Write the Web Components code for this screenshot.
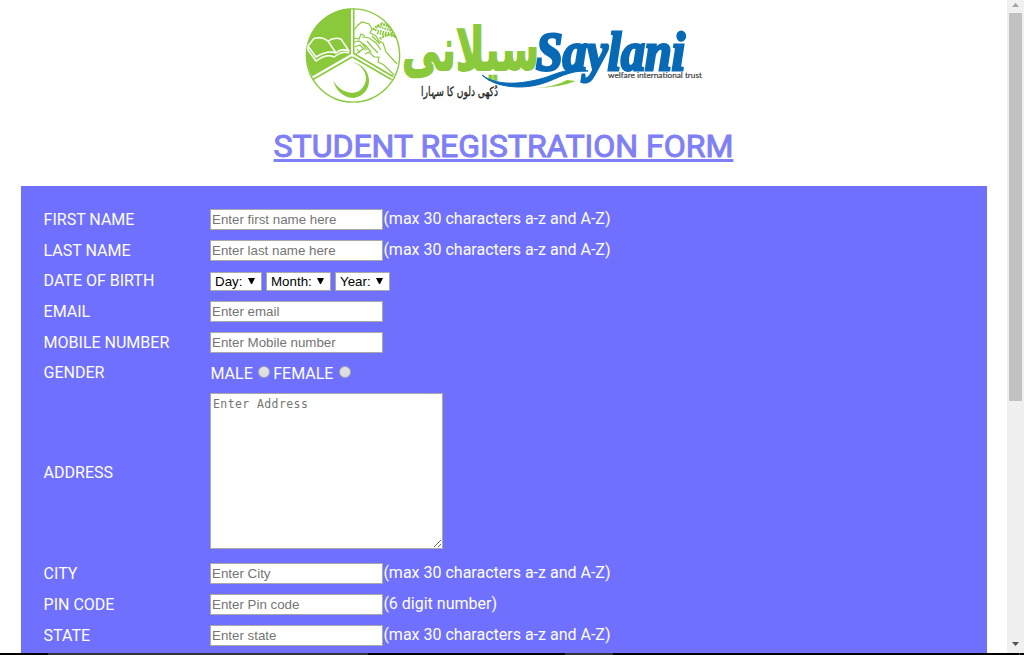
<!DOCTYPE html>
<html lang="en"><head><meta charset="utf-8"><title>Student Registration Form</title>
<style>html,body{margin:0;height:655px;overflow:hidden;background:#fff;font-family:Roboto,"Liberation Sans",sans-serif}</style></head>
<body><registration-page></registration-page>
<script>
const define=(name,html)=>customElements.define(name,class extends HTMLElement{
  constructor(){super();const t=document.createElement('template');t.innerHTML=typeof html==='function'?html(this):html;
    this.attachShadow({mode:'open'}).append(t.content.cloneNode(true));}
});
define('trust-logo',`<style>:host{display:block;height:108px}svg{display:block;margin-left:300px;overflow:visible}</style>
<svg width="410" height="108" viewBox="300 0 410 108" role="img" aria-label="Saylani welfare international trust">
<path d="M351 54L351 8.500A46 46 0 0 0 312 76.500Z" fill="#8bc93c"/>
<g fill="none" stroke="#8bc93c"><circle cx="353" cy="55.500" r="46.600" stroke-width="1.400"/>
<path d="M353.700 8.500V53.500L393 76.500M352 57L313 79.500M352.500 57L391.500 79.500" stroke-width="1.600"/>
<path d="M354 30L358 25 362 22 369 24 372 29 370 33 376 36 379 41 383 43 386 52 397 64M354 38L359 39 361 34 365 36M362 37L369 38 376 43 381 50M354 42L359 41 366 46 371 52M355 47L360 45 365 50M356 54L363 49M367 41L373 48 378 53M365 54L369 52 374 57 379 57 378 62 384 65 394 75M357 49L360 53M361 42L367 50M372 36L380 44" stroke-width="1.200"/>
<path d="M373 30Q382 20 390 28L394 36Q386 33 380 39" stroke-width="2.600" stroke-dasharray="2 1"/><path d="M377 26L392 31M375 30L392 34M381 23L390 27M377 33L388 35" stroke-width="2" stroke-dasharray="1.600 1"/></g>
<path d="M351 62C367 65 371 83 359 91C350 96 338 90 333 80C336 92 345 98 354 98C376 94 373 64 351 62Z" fill="#8bc93c"/>
<g fill="none" stroke="#fff" stroke-width="1.500" stroke-linejoin="round"><path d="M308 46L314 38.500Q322 36 328 41 334 37 341 39L349 51Q341 48 336 53 328 50 316 57Z"/><path d="M328 41L336 53M308 47V50L316 61Q327 53 334 57L337 55Q343 51 349 53"/></g>
<text x="402" y="70" textLength="137" lengthAdjust="spacingAndGlyphs" font-family="DejaVu Sans" font-weight="700" font-size="59" fill="#8bc93c" stroke="#8bc93c" stroke-width="1.800">سیلانی</text>
<path d="M482 75C499 88 528 83 547 77C562 71 576 67 588 71C569 70 557 79 544 83C524 90 495 88 482 75Z" fill="#0869b5" stroke="#0869b5"/>
<path d="M534 88Q555 87 567 80L576 81Q559 88 534 88Z" fill="#8bc93c"/>
<text x="536" y="70" textLength="149" lengthAdjust="spacingAndGlyphs" font-family="Liberation Serif" font-style="italic" font-weight="700" font-size="55" fill="#0869b5" stroke="#0869b5" stroke-width="3">Saylani</text>
<text x="608" y="78" textLength="94" lengthAdjust="spacingAndGlyphs" font-family="Lato" font-size="7.700" fill="#444" stroke="#444" stroke-width=".2">welfare international trust</text>
<text x="421" y="96" textLength="77" lengthAdjust="spacingAndGlyphs" font-family="DejaVu Sans" font-size="13" fill="#222" stroke="#222" stroke-width=".3">دُکھی دلوں کا سہارا</text>
</svg>`);
define('form-row',h=>`<style>:host{display:grid;grid-template-columns:167px 1fr;align-items:center;height:31px}
:host([short]){height:30px}:host([tall]){height:170px}.label{padding:1px 0 0 .6px}:host([short]) .label,:host([tall]) .label{padding-bottom:2px}.field{display:flex;align-items:center}</style>
<div class="label">${h.getAttribute('label')}</div><div class="field"><slot></slot></div>`);
define('text-field',h=>`<style>:host{display:flex;align-items:center}
input{box-sizing:border-box;width:173px;height:21px;margin:0;padding:1px;border:1px solid #a9a9a9;border-radius:0;background:#fff;font:13.333px "Liberation Sans",sans-serif;outline:0}
input::placeholder{color:#757575;opacity:1}.note{padding-left:.4px;margin-top:-1px}</style>
<input placeholder="${h.getAttribute('hint')}"><span class="note"><slot></slot></span>`);
define('select-field',`<style>:host{display:flex;box-sizing:border-box;height:19px;margin:1px 4px 0 0;padding:0 6px 0 4px;border:1px solid #a9a9a9;background:#fff;color:#000;font:13.333px/17px "Liberation Sans",sans-serif;justify-content:space-between;align-items:center}svg{width:7px;height:6px;margin-top:-1px}</style><slot></slot><svg viewBox="0 0 7 6"><path d="M0 0H7L4 6H3Z"/></svg>`);
define('radio-field',`<style>:host{display:flex;align-items:center;padding:2px 0 0 .5px}i{box-sizing:border-box;width:12px;height:12px;margin:-4px 2.800px 0 5.200px;border-radius:50%;border:1px solid #aaa;background:linear-gradient(#e2e2e2,#ddd)}</style><slot></slot><i></i>`);
define('address-field',`<style>:host{display:block;margin-top:-4px}textarea{display:block;box-sizing:border-box;width:233px;height:156px;margin:0;padding:2px;border:1px solid #a9a9a9;border-radius:0;background:#fff;font:11.500px/16px "DejaVu Sans Mono",monospace;letter-spacing:.4px;resize:both;outline:0}textarea::placeholder{color:#757575;opacity:1}</style><textarea placeholder="Enter Address"></textarea>`);
define('scroll-bar',`<style>:host{display:flex;flex-direction:column;align-items:center;background:#f0f0f0}svg{display:block;width:7px;height:4px}.up{margin:3px 0 6px;fill:#a3a3a3}.thumb{width:13px;height:388px;background:#c1c1c1}.down{margin:auto 0 7px;fill:#505050}</style><svg class="up" viewBox="0 0 7 4"><path d="M0 4L3.500 0 7 4Z"/></svg><div class="thumb"></div><svg class="down" viewBox="0 0 7 4"><path d="M0 0L3.500 4 7 0Z"/></svg>`);
define('registration-page',`<style>:host{display:grid;height:655px;grid-template-columns:1007px 17px;grid-template-rows:653px 2px}
main{overflow:hidden}h1{margin:18px 0 0;height:60px;text-align:center;font-size:32px;line-height:41px;font-weight:400;-webkit-text-stroke:1px #7f7ff6;color:#7f7ff6;text-decoration:underline;text-decoration-thickness:3px;text-underline-offset:2px;text-decoration-skip-ink:none}
form{box-sizing:border-box;margin:0 20px 0 21px;height:480px;padding:18px 22px;background:#7070ff;color:#fff;font-size:16px;line-height:20px}
footer{grid-column:1/3;background:linear-gradient(90deg,#000 48px,#333 48px 368px,#000 368px 565px,#333 565px 613px,#000 613px 1019px,#555 1019px 1020px,#000 1020px)}</style>
<main><trust-logo></trust-logo><h1>STUDENT REGISTRATION FORM</h1><form>
<form-row label="FIRST NAME"><text-field hint="Enter first name here">(max 30 characters a-z and A-Z)</text-field></form-row>
<form-row label="LAST NAME"><text-field hint="Enter last name here">(max 30 characters a-z and A-Z)</text-field></form-row>
<form-row short label="DATE OF BIRTH"><select-field style="width:52px">Day:</select-field><select-field style="width:65px">Month:</select-field><select-field style="width:55px">Year:</select-field></form-row>
<form-row label="EMAIL"><text-field hint="Enter email"></text-field></form-row>
<form-row label="MOBILE NUMBER"><text-field hint="Enter Mobile number"></text-field></form-row>
<form-row short label="GENDER"><radio-field>MALE</radio-field><radio-field>FEMALE</radio-field></form-row>
<form-row tall label="ADDRESS"><address-field></address-field></form-row>
<form-row label="CITY"><text-field hint="Enter City">(max 30 characters a-z and A-Z)</text-field></form-row>
<form-row label="PIN CODE"><text-field hint="Enter Pin code">(6 digit number)</text-field></form-row>
<form-row label="STATE"><text-field hint="Enter state">(max 30 characters a-z and A-Z)</text-field></form-row>
</form></main><scroll-bar></scroll-bar><footer></footer>`);
</script></body></html>
